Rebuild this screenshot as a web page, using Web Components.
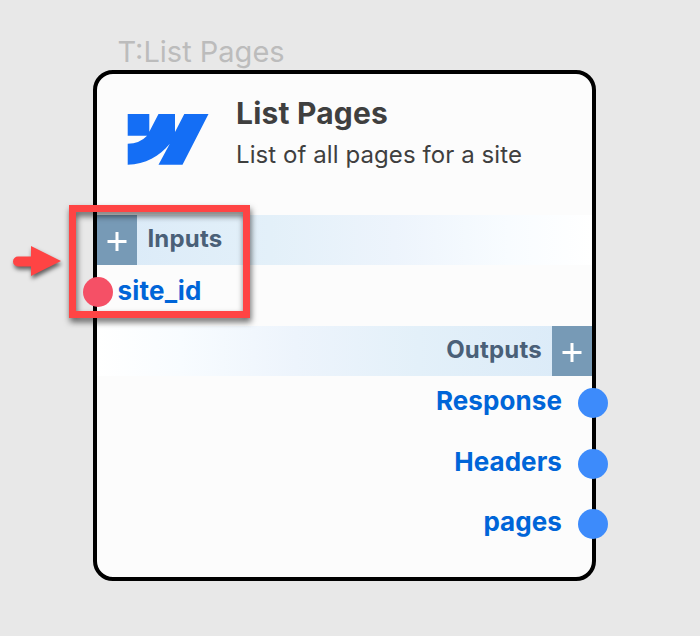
<!DOCTYPE html>
<html lang="en"><head><meta charset="utf-8"><title>List Pages</title>
<style>html,body{margin:0;height:100%;background:#e8e8e8}body{overflow:hidden;font-family:Inter,"Liberation Sans",sans-serif}</style></head><body>
<node-canvas>
<api-node label="T:List Pages">
<node-header slot="header" heading="List Pages" note="List of all pages for a site"></node-header>
<node-band side="left">Inputs</node-band>
<node-port side="left">site_id</node-port>
<node-band side="right">Outputs</node-band>
<node-port side="right">Response</node-port>
<node-port side="right">Headers</node-port>
<node-port side="right">pages</node-port>
</api-node>
<focus-frame slot="marks"></focus-frame>
<pointer-arrow slot="marks"></pointer-arrow>
</node-canvas>
<script>
const define=(name,html,setup)=>customElements.define(name,class extends HTMLElement{
  connectedCallback(){
    if(this.shadowRoot)return;
    const t=document.createElement('template');t.innerHTML=html;
    this.attachShadow({mode:'open'}).append(t.content.cloneNode(true));
    if(setup)setup(this,this.shadowRoot);
  }
});
define('node-canvas',`<style>:host{display:block;position:relative;box-sizing:border-box;width:700px;height:636px;padding:33px 0 0 92.5px;background:#e8e8e8;overflow:hidden}</style><slot></slot><slot name="marks"></slot>`);
define('api-node',`<style>
:host{display:block;width:503.5px}
.label{padding-left:25px;height:37px;line-height:37px;font-size:29px;font-weight:400;color:#bcbcbc;white-space:nowrap}
.card{box-sizing:border-box;height:511.3px;border:4px solid #000;border-radius:20px;background:#fcfcfc;display:flex;flex-direction:column}
</style><div class="label"></div><div class="card"><slot name="header"></slot><slot></slot></div>`,(e,r)=>{r.querySelector('.label').textContent=e.getAttribute('label')});
define('node-header',`<style>
:host{display:flex;height:141px;flex:none;color:#3f3f3f;white-space:nowrap}
svg{width:81px;height:51px;margin:40px 27.5px 0 31px;flex:none;overflow:visible}
h1{margin:20px 0 0;font-size:30px;line-height:38px;font-weight:700;letter-spacing:.2px}
p{margin:7px 0 0;font-size:24px;line-height:32px;font-weight:400;letter-spacing:.08px}
</style><svg viewBox="0 0 81 51"><path fill="#146ef5" d="M-.3 0H21.3V17.7L30.5 0H47V18L56.3 0H80.5L54.5 50.7H30.5L41.8 29.7C31.5 42.5 17.5 50 -.3 50.7V29.7Q11.5 29.7 19.1 21.7H-.3Z"/></svg><div><h1></h1><p></p></div>`,(e,r)=>{r.querySelector('h1').textContent=e.getAttribute('heading');r.querySelector('p').textContent=e.getAttribute('note')});
define('node-band',`<style>
:host{display:flex;flex:none;height:50px;align-items:stretch;font-size:24px;line-height:48px;font-weight:700;letter-spacing:.2px;color:#4a6078;background:linear-gradient(90deg,#daeaf8,#e3f0f9 35%,#edf4fc 60%,#f8fcff 83%,#fff)}
:host([side=right]){flex-direction:row-reverse;background:linear-gradient(270deg,#daeaf8,#e3f0f9 35%,#edf4fc 60%,#f8fcff 83%,#fff)}
.add{width:40.5px;background:#779ab6;display:flex;justify-content:center;align-items:center}
svg{width:20px;height:20px;margin-top:3px}
.name{padding:0 9.6px 0 10.4px}
</style><div class="add"><svg viewBox="0 0 20 20"><path d="M.5 9.5h19M10 0v19" stroke="#fff" stroke-width="3"/></svg></div><div class="name"><slot></slot></div>`);
define('node-port',`<style>
:host{display:flex;flex:none;height:60.4px;align-items:flex-start;font-size:26px;line-height:36px;font-weight:700;letter-spacing:.08px;color:#0065d8}
:host([side=left]){height:61px}
:host([side=right]){flex-direction:row-reverse}
i{display:block;width:30px;height:30px;border-radius:50%;background:#f55066;margin:12.4px 5px 0 -14px}
:host([side=right]) i{margin:12.2px -16px 0 16px;background:#3d8bfb}
.name{padding-top:7.4px}
:host([side=left]) .name{padding-top:8px;letter-spacing:.2px}
</style><i></i><div class="name"><slot></slot></div>`);
define('focus-frame',`<style>:host{position:absolute;left:69px;top:205px;width:181px;height:113px;box-sizing:border-box;border:7px solid #ff4444;filter:drop-shadow(1px 4px 3px #0009)}</style>`);
define('pointer-arrow',`<style>:host{position:absolute;left:12px;top:245px;width:50px;height:34px}svg{display:block;overflow:visible;filter:drop-shadow(1px 3px 2px #0009)}</style><svg width="50" height="34" viewBox="0 0 50 34"><path fill="#ff4444" d="M6 11.5H19V1L49 16 19 31V21.5H6A5 5 0 0 1 6 11.5Z"/></svg>`);
</script></body></html>
